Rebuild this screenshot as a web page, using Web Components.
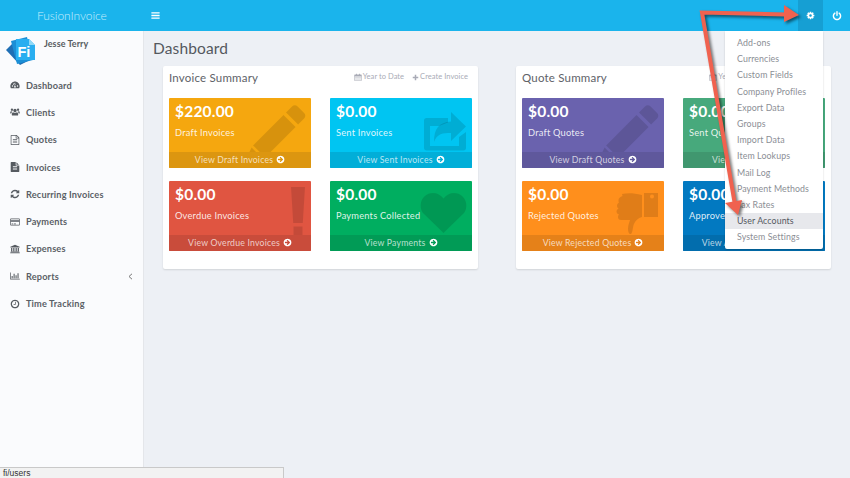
<!DOCTYPE html>
<html lang="en">
<head>
<meta charset="utf-8">
<title>FusionInvoice</title>
<style>
    html, body { margin: 0; height: 100%; overflow: hidden; }
    body { font-family: Lato, "Liberation Sans", sans-serif; background: #edf0f5; }
</style>
</head>
<body>
<fi-app>
    <fi-topbar slot="top"></fi-topbar>
    <fi-sidebar slot="side" user="Jesse Terry">
        <fi-nav-item icon="dashboard">Dashboard</fi-nav-item>
        <fi-nav-item icon="users">Clients</fi-nav-item>
        <fi-nav-item icon="fileo">Quotes</fi-nav-item>
        <fi-nav-item icon="file">Invoices</fi-nav-item>
        <fi-nav-item icon="refresh">Recurring Invoices</fi-nav-item>
        <fi-nav-item icon="card">Payments</fi-nav-item>
        <fi-nav-item icon="bank">Expenses</fi-nav-item>
        <fi-nav-item icon="chart" chevron>Reports</fi-nav-item>
        <fi-nav-item icon="clock">Time Tracking</fi-nav-item>
    </fi-sidebar>
    <fi-dashboard>
        <fi-panel heading="Invoice Summary" action="Create Invoice">
            <fi-tile amount="$220.00" label="Draft Invoices" link="View Draft Invoices" bg="#f5a70f" foot="#dc9610" icon="pencil"></fi-tile>
            <fi-tile amount="$0.00" label="Sent Invoices" link="View Sent Invoices" bg="#00c5f2" foot="#01aed8" icon="share"></fi-tile>
            <fi-tile amount="$0.00" label="Overdue Invoices" link="View Overdue Invoices" bg="#e05541" foot="#c94c3b" icon="bang"></fi-tile>
            <fi-tile amount="$0.00" label="Payments Collected" link="View Payments" bg="#00ae60" foot="#019b56" icon="heart"></fi-tile>
        </fi-panel>
        <fi-panel heading="Quote Summary" action="Create Quote">
            <fi-tile amount="$0.00" label="Draft Quotes" link="View Draft Quotes" bg="#6a62ae" foot="#5f589c" icon="pencil"></fi-tile>
            <fi-tile amount="$0.00" label="Sent Quotes" link="View Sent Quotes" bg="#47a97c" foot="#40976f" icon="share"></fi-tile>
            <fi-tile amount="$0.00" label="Rejected Quotes" link="View Rejected Quotes" bg="#ff8f1c" foot="#e58119" icon="thumb"></fi-tile>
            <fi-tile amount="$0.00" label="Approved Quotes" link="View Approved Quotes" bg="#0279c1" foot="#026dad" icon="thumbup"></fi-tile>
        </fi-panel>
    </fi-dashboard>
    <fi-menu slot="over">
        <a>Add-ons</a><a>Currencies</a><a>Custom Fields</a><a>Company Profiles</a><a>Export Data</a><a>Groups</a><a>Import Data</a><a>Item Lookups</a><a>Mail Log</a><a>Payment Methods</a><a>Tax Rates</a><a class="on">User Accounts</a><a>System Settings</a>
    </fi-menu>
    <fi-arrows slot="over"></fi-arrows>
    <fi-status slot="over">fi/users</fi-status>
</fi-app>

<script>
// Font Awesome style glyphs on a 1792 grid, plus a few rough ones for the big tile icons
const ICONS = {
    bars: '<path d="M224 352h1344v224H224zM224 784h1344v224H224zM224 1216h1344v224H224z"/>',
    cog: '<path d="M1152 896q0-106-75-181t-181-75-181 75-75 181 75 181 181 75 181-75 75-181zm512-109v222q0 12-8 23t-20 13l-185 28q-19 54-39 91 35 50 107 138 10 12 10 25t-9 23q-27 37-99 108t-94 71q-12 0-26-9l-138-108q-44 23-91 38-16 136-29 186-7 28-36 28h-222q-14 0-24.5-8.5t-11.5-21.5l-28-184q-49-16-90-37l-141 107q-10 9-25 9-14 0-25-11-126-114-165-168-7-10-7-23 0-12 8-23 15-21 51-66.5t54-70.5q-27-50-41-99l-183-27q-13-2-21-12.5t-8-23.5v-222q0-12 8-23t19-13l186-28q14-46 39-92-40-57-107-138-10-12-10-24 0-10 9-23 26-36 98.5-107.5t94.5-71.5q13 0 26 10l138 107q44-23 91-38 16-136 29-186 7-28 36-28h222q14 0 24.5 8.5t11.5 21.5l28 184q49 16 90 37l142-107q9-9 24-9 13 0 25 10 129 119 165 170 7 8 7 22 0 12-8 23-15 21-51 66.5t-54 70.5q26 50 41 98l183 28q13 2 21 12.5t8 23.5z"/>',
    power: '<path d="M1664 896q0 156-61 298t-164 245-245 164-298 61-298-61-245-164-164-245-61-298q0-182 80.5-343t226.5-270q43-32 95.5-25t83.5 50q32 42 24.5 94.5t-49.5 84.5q-98 74-151.5 181t-53.5 228q0 104 40.5 198.5t109.5 163.5 163.5 109.5 198.5 40.5 198.5-40.5 163.5-109.5 109.5-163.5 40.5-198.5q0-121-53.5-228t-151.5-181q-42-32-49.5-84.5t24.5-94.5q31-43 84-50t95 25q146 109 226.5 270t80.5 343zm-640-768v640q0 52-38 90t-90 38-90-38-38-90v-640q0-52 38-90t90-38 90 38 38 90z"/>',
    dashboard: '<path fill-rule="evenodd" d="M896 256C440 256 64 640 64 1120c0 140 30 260 90 376h1484c60-116 90-236 90-376 0-480-376-864-832-864zM448 1216a128 128 0 1 1 0-256 128 128 0 0 1 0 256zm192-352a128 128 0 1 1 0-256 128 128 0 0 1 0 256zm256-130a110 110 0 1 1 0-220 110 110 0 0 1 0 220zm0 640c-90 0-160-70-160-160 0-60 30-110 80-138l110-500 90 20-110 500c80 20 150 70 150 118 0 90-70 160-160 160zm448-160a128 128 0 1 1 0-256 128 128 0 0 1 0 256z"/>',
    users: '<circle cx="896" cy="620" r="300"/><circle cx="350" cy="480" r="210"/><circle cx="1442" cy="480" r="210"/><path d="M460 1540c-90 0-140-50-140-150 0-250 80-460 250-460 90 80 190 120 326 120s236-40 326-120c170 0 250 210 250 460 0 100-50 150-140 150zM40 1060c0-180 60-300 180-300 60 50 120 70 190 60-40 90-140 170-170 360H120c-50 0-80-40-80-120zM1752 1060c0-180-60-300-180-300-60 50-120 70-190 60 40 90 140 170 170 360h120c50 0 80-40 80-120z"/>',
    fileo: '<path d="M1596 380q28 28 48 76t20 88v1152q0 40-28 68t-68 28h-1344q-40 0-68-28t-28-68v-1600q0-40 28-68t68-28h896q40 0 88 20t76 48zm-444-244v376h376q-10-29-22-41l-313-313q-12-12-41-22zm384 1528v-1024h-416q-40 0-68-28t-28-68v-416h-768v1536h1280zm-1024-864q0-14 9-23t23-9h704q14 0 23 9t9 23v64q0 14-9 23t-23 9h-704q-14 0-23-9t-9-23v-64zm736 224q14 0 23 9t9 23v64q0 14-9 23t-23 9h-704q-14 0-23-9t-9-23v-64q0-14 9-23t23-9h704zm0 256q14 0 23 9t9 23v64q0 14-9 23t-23 9h-704q-14 0-23-9t-9-23v-64q0-14 9-23t23-9h704z"/>',
    file: '<path d="M1596 476q14 14 28 36h-472v-472q22 14 36 28zm-476 164h544v1056q0 40-28 68t-68 28h-1344q-40 0-68-28t-28-68v-1600q0-40 28-68t68-28h800v544q0 40 28 68t68 28zm160 736v-64q0-14-9-23t-23-9h-704q-14 0-23 9t-9 23v64q0 14 9 23t23 9h704q14 0 23-9t9-23zm0-256v-64q0-14-9-23t-23-9h-704q-14 0-23 9t-9 23v64q0 14 9 23t23 9h704q14 0 23-9t9-23zm0-256v-64q0-14-9-23t-23-9h-704q-14 0-23 9t-9 23v64q0 14 9 23t23 9h704q14 0 23-9t9-23z"/>',
    refresh: '<path d="M1639 1056q0 5-1 7-64 268-268 434.5t-478 166.5q-146 0-282.5-55t-243.5-157l-129 129q-19 19-45 19t-45-19-19-45v-448q0-26 19-45t45-19h448q26 0 45 19t19 45-19 45l-137 137q71 66 161 102t187 36q134 0 250-65t186-179q11-17 53-117 8-23 30-23h192q13 0 22.5 9.5t9.5 22.5zm25-800v448q0 26-19 45t-45 19h-448q-26 0-45-19t-19-45 19-45l138-138q-148-137-349-137-134 0-250 65t-186 179q-11 17-53 117-8 23-30 23h-199q-13 0-22.5-9.5t-9.5-22.5v-7q65-268 270-434.5t480-166.5q146 0 284 55.5t245 156.5l130-129q19-19 45-19t45 19 19 45z"/>',
    card: '<path fill-rule="evenodd" d="M160 256h1472c70 0 128 58 128 128v1024c0 70-58 128-128 128H160c-70 0-128-58-128-128V384c0-70 58-128 128-128zm0 128v192h1472V384zm0 448v576h1472V832zm128 320h256v128H288zm384 0h384v128H672z"/>',
    bank: '<path d="M896 128l832 384v128H64V512zM192 704h224v576H192zM576 704h224v576H576zM992 704h224v576H992zM1376 704h224v576h-224zM128 1344h1536v128H128zM32 1536h1728v128H32z"/>',
    chart: '<path d="M32 256h128v1152h1600v128H32zM288 896h192v384H288zM640 512h192v768H640zM992 768h192v512H992zM1344 384h192v896h-192z"/>',
    clock: '<path d="M1024 544v448q0 14-9 23t-23 9h-320q-14 0-23-9t-9-23v-64q0-14 9-23t23-9h224v-352q0-14 9-23t23-9h64q14 0 23 9t9 23zm416 352q0-148-73-273t-198-198-273-73-273 73-198 198-73 273 73 273 198 198 273 73 273-73 198-198 73-273zm224 0q0 209-103 385.5t-279.5 279.5-385.5 103-385.5-103-279.5-279.5-103-385.5 103-385.5 279.5-279.5 385.5-103 385.5 103 279.5 279.5 103 385.5z"/>',
    calendar: '<path fill-rule="evenodd" d="M192 320h256V160h192v160h512V160h192v160h256c70 0 128 58 128 128v1152c0 70-58 128-128 128H192c-70 0-128-58-128-128V448c0-70 58-128 128-128zm0 448v832h1408V768zm128 128h256v192H320zm448 0h256v192H768zm448 0h256v192h-256zM320 1248h256v192H320zm448 0h256v192H768zm448 0h256v192h-256z"/>',
    plus: '<path d="M704 192h384v512h512v384h-512v512H704v-512H192V704h512z"/>',
    go: '<path d="M1412 897q0-27-18-45l-362-362-91-91q-18-18-45-18t-45 18l-91 91q-18 18-18 45t18 45l189 189h-502q-26 0-45 19t-19 45v128q0 26 19 45t45 19h502l-189 189q-19 19-19 45t19 45l91 91q18 18 45 18t45-18l91-91 362-362q18-18 18-45zm252-1q0 209-103 385.5t-279.5 279.5-385.5 103-385.5-103-279.5-279.5-103-385.5 103-385.5 279.5-279.5 385.5-103 385.5 103 279.5 279.5 103 385.5z"/>'
};

// big faded shapes in tile coordinates (142x70 box)
const TILE_ICONS = {
    pencil: '<path d="M123 8.500c1.600-1.600 4-1.600 5.600 0l6.500 6.500c1.600 1.600 1.600 4 0 5.600l-6 6-12.100-12.100zM114.500 17l12.100 12.100-30.400 30.400-12.100-12.100zM82.600 49.500l11.800 11.800-4 .7-11.900 2.500-1.500-3.500z"/>',
    share: '<path fill-rule="evenodd" d="M96 20h22v4.500l-9 3.500H100v20h29v-9l7-5v16c0 1.500-1 2.500-2.500 2.500h-37c-1.500 0-2.500-1-2.500-2.500V22.500c0-1.500 1-2.500 2.500-2.500z"/><path d="M121 14l15 14.500L121 43v-8c-8 0-14 .5-17 9 0-14 5-19.500 17-20.500z"/>',
    bang: '<path d="M122 6h14l-2.200 36h-9.600zM124.500 45.500h9V56h-9z"/>',
    heart: '<path d="M113.500 52L93 32c-1.500-1.500-3-6-2-10.500 1-4.500 5.500-9.500 12-9.500 4 0 8 2 10.500 5.500C116 14 120 12 124 12c6.500 0 11 5 12 9.500 1 4.500-.5 9-2 10.500z"/>',
    thumb: '<path fill-rule="evenodd" d="M122 12h14v24h-14zM128 15.500a2 2 0 1 0 4 0 2 2 0 0 0-4 0z"/><path d="M100 13c6-1.500 12-1 20 1v22c-4 1-6 3-8 7-1.500 3.500-1 8-3 10-2 .5-3-2-3-5 0-3.500 1-6 2-9H99c-2.500 0-3-1.500-3-3 0-1 .5-2 1-2.500-1.500-.5-2.500-1.500-2.500-3 0-1.500 1-2.500 2-3-1-.5-1.500-1.500-1.500-3 0-1.500 1-2.500 2-3-.5-.5-.5-1.500-.5-2.500 0-2 1.500-3 4-4z"/>',
    thumbup: ''
};

function icon(name, size) {
    return `<svg viewBox="0 0 1792 1792" width="${size}" height="${size}" fill="currentColor" aria-hidden="true">${ICONS[name]}</svg>`;
}

class FiApp extends HTMLElement {
    constructor() {
        super();
        this.attachShadow({ mode: 'open' });
        this.shadowRoot.innerHTML = `
            <style>
                :host {
                    display: flex;
                    flex-direction: column;
                    position: relative;
                    width: 850px;
                    height: 478px;
                    overflow: hidden;
                }
                .body { display: flex; flex: 1; min-height: 0; }
            </style>
            <slot name="top"></slot>
            <div class="body">
                <slot name="side"></slot>
                <slot></slot>
            </div>
            <slot name="over"></slot>
        `;
    }
}

class FiTopbar extends HTMLElement {
    constructor() {
        super();
        this.attachShadow({ mode: 'open' });
        this.shadowRoot.innerHTML = `
            <style>
                :host {
                    display: flex;
                    align-items: stretch;
                    height: 31px;
                    background: #1ab4ec;
                    color: #fff;
                }
                .brand {
                    width: 143px;
                    padding-left: 37px;
                    box-sizing: border-box;
                    font: 300 12px/31px Lato, sans-serif;
                    letter-spacing: -0.05px;
                    color: #c6edfc;
                }
                .toggle { display: flex; align-items: center; padding-left: 7px; flex: 1; }
                .btn { width: 25px; display: flex; align-items: center; justify-content: center; }
                .btn.on { background: #169fd3; }
                .power { width: 27px; }
            </style>
            <div class="brand">FusionInvoice</div>
            <div class="toggle">${icon('bars', 11)}</div>
            <div class="btn on">${icon('cog', 9)}</div>
            <div class="btn power">${icon('power', 10)}</div>
        `;
    }
}

class FiSidebar extends HTMLElement {
    constructor() {
        super();
        this.attachShadow({ mode: 'open' });
        this.shadowRoot.innerHTML = `
            <style>
                :host {
                    display: block;
                    width: 144px;
                    box-sizing: border-box;
                    flex: none;
                    background: #fafbfd;
                    border-right: 1px solid #e4e6ea;
                }
                .user { display: flex; height: 40.500px; padding: 6px 0 0 6px; box-sizing: border-box; }
                .user svg { flex: none; }
                .name {
                    margin: 0 0 0 9px;
                    font: 700 9px/14px Lato, sans-serif;
                    letter-spacing: .05px;
                    color: #565b61;
                }
                nav { display: block; }
            </style>
            <div class="user">
                <svg width="29" height="29" viewBox="0 0 29 29">
                    <path fill="#1f6fb5" d="M0 13l8-8 16 18-10 5z"/>
                    <path fill="#1b8fd6" d="M5 4l16-4 6 23-16 4z"/>
                    <path fill="#29aef0" d="M10 2h13l6 6v15H10z"/>
                    <path fill="#8fd9f7" d="M23 2l6 6h-6z"/>
                    <text x="11.500" y="20" font-family="Liberation Sans, sans-serif" font-weight="700" font-size="14.500" fill="#fff">Fi</text>
                </svg>
                <div class="name">${this.getAttribute('user') || ''}</div>
            </div>
            <nav><slot></slot></nav>
        `;
    }
}

class FiNavItem extends HTMLElement {
    constructor() {
        super();
        this.attachShadow({ mode: 'open' });
    }

    connectedCallback() {
        const chevron = this.hasAttribute('chevron')
            ? '<svg class="chev" width="5" height="7" viewBox="0 0 5 7"><path d="M4 .8L1 3.500l3 2.700" fill="none" stroke="#777" stroke-width="1"/></svg>'
            : '';
        this.shadowRoot.innerHTML = `
            <style>
                :host {
                    display: flex;
                    align-items: center;
                    height: 27.300px;
                    padding: 0 10px 0 10px;
                    font: 700 9.200px Lato, sans-serif;
                    letter-spacing: .15px;
                    color: #5a5f66;
                }
                svg { flex: none; }
                .ico { color: #565b61; margin-right: 6px; display: flex; }
                .txt { flex: 1; }
            </style>
            <span class="ico">${icon(this.getAttribute('icon'), 10)}</span>
            <span class="txt"><slot></slot></span>
            ${chevron}
        `;
    }
}

class FiDashboard extends HTMLElement {
    constructor() {
        super();
        this.attachShadow({ mode: 'open' });
        this.shadowRoot.innerHTML = `
            <style>
                :host { display: block; flex: 1; padding: 0 0 0 9px; }
                h1 {
                    margin: 0;
                    height: 35px;
                    font: 400 15.500px/35px Lato, sans-serif;
                    letter-spacing: .15px;
                    color: #54585e;
                }
                .panels {
                    display: grid;
                    grid-template-columns: 315px 315px;
                    column-gap: 38px;
                    margin-left: 10px;
                }
            </style>
            <h1>Dashboard</h1>
            <div class="panels"><slot></slot></div>
        `;
    }
}

class FiPanel extends HTMLElement {
    constructor() {
        super();
        this.attachShadow({ mode: 'open' });
    }

    connectedCallback() {
        this.shadowRoot.innerHTML = `
            <style>
                :host {
                    display: block;
                    background: #fff;
                    border-radius: 2px;
                    box-shadow: 0 1px 2px rgba(0, 0, 0, 0.12);
                    padding: 0 6px 18px;
                }
                header {
                    display: flex;
                    align-items: flex-start;
                    height: 32px;
                    padding: 5px 4px 0 0;
                    box-sizing: border-box;
                }
                h2 {
                    margin: 0;
                    flex: 1;
                    font: 400 11.500px/14px Lato, sans-serif;
                    letter-spacing: .2px;
                    color: #5e6268;
                }
                .link {
                    display: flex;
                    align-items: center;
                    gap: 1px;
                    margin-left: 8px;
                    font: 400 7.500px/12px Lato, sans-serif;
                    letter-spacing: .05px;
                    color: #a9abb6;
                }
                .tiles {
                    display: grid;
                    grid-template-columns: 142px 142px;
                    grid-auto-rows: 70px;
                    column-gap: 19px;
                    row-gap: 13px;
                }
            </style>
            <header>
                <h2>${this.getAttribute('heading')}</h2>
                <span class="link">${icon('calendar', 8)}Year to Date</span>
                <span class="link">${icon('plus', 7)}${this.getAttribute('action')}</span>
            </header>
            <div class="tiles"><slot></slot></div>
        `;
    }
}

class FiTile extends HTMLElement {
    constructor() {
        super();
        this.attachShadow({ mode: 'open' });
    }

    connectedCallback() {
        const bg = this.getAttribute('bg');
        const foot = this.getAttribute('foot');
        this.shadowRoot.innerHTML = `
            <style>
                :host {
                    display: flex;
                    flex-direction: column;
                    position: relative;
                    overflow: hidden;
                    border-radius: 1px;
                    background: ${bg};
                    color: #fff;
                    font-family: Lato, sans-serif;
                }
                .art { position: absolute; left: 0; top: 0; fill: rgba(0, 0, 0, 0.12); }
                .main { flex: 1; padding: 4px 6px 0; position: relative; }
                .amount { font-weight: 700; font-size: 15.500px; line-height: 19px; letter-spacing: .2px; }
                .label { margin-top: 6px; font-size: 9.300px; line-height: 12px; letter-spacing: .2px; color: rgba(255, 255, 255, 0.88); }
                .foot {
                    position: relative;
                    display: flex;
                    align-items: center;
                    justify-content: center;
                    gap: 3px;
                    height: 16px;
                    padding-bottom: 1px;
                    box-sizing: border-box;
                    background: ${foot};
                    font-size: 8.700px;
                    letter-spacing: .2px;
                    color: rgba(255, 255, 255, 0.72);
                }
                .foot svg { color: #fff; }
            </style>
            <svg class="art" width="142" height="70" viewBox="0 0 142 70">${TILE_ICONS[this.getAttribute('icon')] || ''}</svg>
            <div class="main">
                <div class="amount">${this.getAttribute('amount')}</div>
                <div class="label">${this.getAttribute('label')}</div>
            </div>
            <div class="foot"><span>${this.getAttribute('link')}</span>${icon('go', 9)}</div>
        `;
    }
}

class FiMenu extends HTMLElement {
    constructor() {
        super();
        this.attachShadow({ mode: 'open' });
        this.shadowRoot.innerHTML = `
            <style>
                :host {
                    display: block;
                    position: absolute;
                    left: 725px;
                    top: 31px;
                    width: 98px;
                    padding: 4px 0;
                    background: #fff;
                    border-radius: 0 0 2px 2px;
                    box-shadow: 0 1px 2px rgba(0, 0, 0, 0.2);
                }
                ::slotted(a) {
                    display: block;
                    height: 16.200px;
                    padding-left: 12px;
                    font: 400 8.800px/16.200px Lato, sans-serif;
                    letter-spacing: .1px;
                    color: #8b8e95;
                }
                ::slotted(a.on) { background: #e7e8ec; color: #55585f; }
            </style>
            <slot></slot>
        `;
    }
}

class FiArrows extends HTMLElement {
    constructor() {
        super();
        this.attachShadow({ mode: 'open' });
        this.shadowRoot.innerHTML = `
            <style>
                :host { position: absolute; left: 0; top: 0; pointer-events: none; }
                svg { display: block; filter: drop-shadow(2px 2px 1.500px rgba(0, 0, 0, 0.55)); }
            </style>
            <svg width="850" height="478" viewBox="0 0 850 478">
                <path d="M786 14.500L702 12.500 735 205" fill="none" stroke="#f0624f" stroke-width="4" stroke-linejoin="miter"/>
                <path d="M784 5l15 10-15 7zM725 203l17-3-4 15z" fill="#f0624f"/>
            </svg>
        `;
    }
}

class FiStatus extends HTMLElement {
    constructor() {
        super();
        this.attachShadow({ mode: 'open' });
        this.shadowRoot.innerHTML = `
            <style>
                :host {
                    display: block;
                    position: absolute;
                    left: 0;
                    bottom: 0;
                    width: 284px;
                    height: 11.500px;
                    box-sizing: border-box;
                    padding-left: 3px;
                    background: #f2f2f2;
                    border: 1px solid #c9c9c9;
                    border-left: 0;
                    border-bottom: 0;
                    font: 400 8.500px/10px "Liberation Sans", sans-serif;
                    color: #333;
                }
            </style>
            <slot></slot>
        `;
    }
}

customElements.define('fi-app', FiApp);
customElements.define('fi-topbar', FiTopbar);
customElements.define('fi-sidebar', FiSidebar);
customElements.define('fi-nav-item', FiNavItem);
customElements.define('fi-dashboard', FiDashboard);
customElements.define('fi-panel', FiPanel);
customElements.define('fi-tile', FiTile);
customElements.define('fi-menu', FiMenu);
customElements.define('fi-arrows', FiArrows);
customElements.define('fi-status', FiStatus);
</script>
</body>
</html>
